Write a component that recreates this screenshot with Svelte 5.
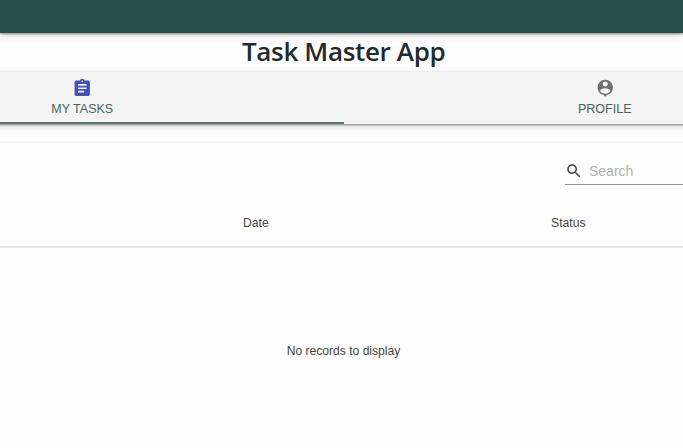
<script>
  let selected = $state('tasks');
</script>

<div class="page">
  <header class="appbar"></header>
  <h1><span>Task Master App</span></h1>
  <nav class="tabs">
    <button class="tab tasks" class:active={selected === 'tasks'} onclick={() => (selected = 'tasks')}>
      <svg viewBox="0 0 24 24" fill="#4751b5"><path d="M19 3h-4.180C14.400 1.840 13.300 1 12 1c-1.300 0-2.400.84-2.820 2H5c-1.100 0-2 .9-2 2v14c0 1.100.9 2 2 2h14c1.100 0 2-.9 2-2V5c0-1.100-.9-2-2-2zm-7 0c.55 0 1 .45 1 1s-.45 1-1 1-1-.45-1-1 .45-1 1-1zm2 14H7v-2h7v2zm3-4H7v-2h10v2zm0-4H7V7h10v2z" /></svg>
      <span>MY TASKS</span>
    </button>
    <button class="tab profile" class:active={selected === 'profile'} onclick={() => (selected = 'profile')}>
      <svg viewBox="0 0 24 24" fill="#707070"><path d="M12 2c-4.970 0-9 4.030-9 9 0 4.170 2.840 7.670 6.690 8.690L12 22l2.310-2.310C18.160 18.670 21 15.170 21 11c0-4.970-4.030-9-9-9zm0 2c1.660 0 3 1.340 3 3s-1.340 3-3 3-3-1.340-3-3 1.340-3 3-3zm0 14.300c-2.500 0-4.710-1.280-6-3.220.030-1.990 4-3.080 6-3.080 1.990 0 5.970 1.090 6 3.080-1.290 1.940-3.500 3.220-6 3.220z" /></svg>
      <span>PROFILE</span>
    </button>
  </nav>
  <main class="paper">
    <div class="toolbar">
      <label class="search">
        <svg viewBox="0 0 24 24" fill="#444"><path d="M15.500 14h-.79l-.28-.27C15.410 12.590 16 11.110 16 9.500 16 5.910 13.090 3 9.500 3S3 5.910 3 9.500 5.910 16 9.500 16c1.610 0 3.090-.59 4.230-1.570l.27.28v.79l5 4.990L20.490 19l-4.990-5zm-6 0C7.010 14 5 11.990 5 9.500S7.010 5 9.500 5 14 7.010 14 9.500 11.990 14 9.500 14z" /></svg>
        <input type="text" placeholder="Search" />
      </label>
    </div>
    <div class="columns">
      <span class="date">Date</span>
      <span class="status">Status</span>
    </div>
    <div class="empty"><span>No records to display</span></div>
  </main>
</div>

<style>
  :global(body) {
    margin: 0;
    background: #fefefe;
    overflow: hidden;
  }
  .page {
    height: 448px;
    overflow: hidden;
    display: flex;
    flex-direction: column;
    background: #fefefe;
    font-family: 'Liberation Sans', Arial, sans-serif;
    color: #444;
  }
  .appbar {
    height: 33px;
    flex: none;
    background: #284f4b;
    box-shadow: 0 1px 2px rgba(0, 0, 0, 0.4), 0 2px 8px rgba(0, 0, 0, 0.18);
  }
  h1 {
    height: 39px;
    flex: none;
    box-sizing: border-box;
    margin: 0;
    padding-left: 242px;
    font: 600 26px/37px 'Open Sans', 'Noto Sans', sans-serif;
    color: #24292e;
    white-space: nowrap;
    letter-spacing: -0.35px;
  }
  .tabs {
    height: 52px;
    flex: none;
    margin: 0 -183px 0 -179px;
    display: flex;
    background: #f4f4f4;
    box-shadow: 0 1px 2px rgba(0, 0, 0, 0.42), 0 2px 8px rgba(0, 0, 0, 0.16);
  }
  .tab {
    flex: 1;
    box-sizing: border-box;
    border: 0;
    border-bottom: 2px solid transparent;
    margin: 0;
    padding: 6px 0 0;
    background: none;
    font: 12.5px/15px 'Liberation Sans', Arial, sans-serif;
    color: #456560;
    display: flex;
    flex-direction: column;
    align-items: center;
    gap: 3px;
  }
  .tab.active {
    border-bottom-color: #56756f;
  }
  .tab svg {
    width: 20.5px;
    height: 20.5px;
    flex: none;
  }
  .paper {
    flex: 1;
    margin-top: 19px;
    display: flex;
    flex-direction: column;
    background: #fefefe;
    box-shadow: 0 0 2px rgba(0, 0, 0, 0.14);
  }
  .toolbar {
    height: 56px;
    flex: none;
    display: flex;
    justify-content: flex-end;
  }
  .search {
    width: 118px;
    height: 42px;
    box-sizing: border-box;
    padding-top: 14px;
    border-bottom: 1px solid #929292;
    display: flex;
    align-items: center;
  }
  .search svg {
    width: 18px;
    height: 18px;
    flex: none;
  }
  .search input {
    border: 0;
    outline: 0;
    background: none;
    min-width: 0;
    flex: 1;
    padding: 0;
    margin-left: 6px;
    font: 14px/20px 'Liberation Sans', Arial, sans-serif;
    color: #333;
  }
  .search input::placeholder {
    color: #b0b0b0;
    opacity: 1;
  }
  .columns {
    height: 49px;
    flex: none;
    box-sizing: border-box;
    border-bottom: 2px solid #e7e7e7;
    padding-left: 243px;
    display: flex;
    font-size: 12.2px;
    line-height: 48px;
  }
  .date {
    width: 308px;
  }
  .empty {
    height: 206px;
    display: flex;
    justify-content: center;
    align-items: center;
    padding-left: 4px;
    font-size: 12.1px;
  }
</style>
